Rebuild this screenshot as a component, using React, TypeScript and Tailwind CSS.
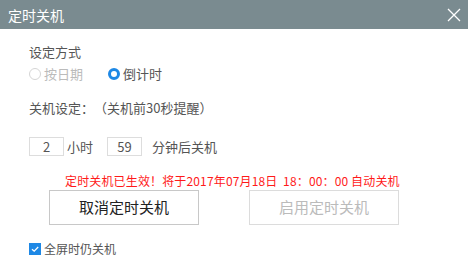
import React from "react";

export default function App() {
  const font = { fontFamily: '"Noto Sans CJK SC", "Liberation Sans", sans-serif' };
  return (
    <div className="w-[468px] h-[270px] bg-white overflow-hidden [text-spacing-trim:space-all]" style={font}>
      <div className="h-[29px] bg-[#7a8b90] flex items-center justify-between pl-[8px] pr-[7px]">
        <span className="text-[14px] text-white leading-none">定时关机</span>
        <svg width="14" height="14" viewBox="0 0 14 14" className="mt-[1px]">
          <path d="M1 1 L13 13 M13 1 L1 13" stroke="#ffffff" strokeWidth="1.3" fill="none" />
        </svg>
      </div>
      <div className="pl-[29px] flex flex-col">
        <div className="mt-[14px] h-[18px] flex items-center text-[13px] text-[#555]">设定方式</div>
        <div className="mt-[4px] h-[18px] flex items-center text-[13px]">
          <div className="flex items-center w-[79px]">
            <span className="w-[12px] h-[12px] rounded-full border border-[#d5d5d5] bg-white"></span>
            <span className="ml-[3px] text-[#bbbbbb]">按日期</span>
          </div>
          <div className="flex items-center">
            <span className="w-[12px] h-[12px] rounded-full border-[3px] border-[#1e88e5] bg-white"></span>
            <span className="ml-[3px] text-[#555]">倒计时</span>
          </div>
        </div>
        <div className="mt-[16px] h-[18px] flex items-center text-[13px] text-[#555]">关机设定：（关机前30秒提醒）</div>
        <div className="mt-[20px] flex items-center text-[13px] text-[#555]">
          <div className="w-[35px] h-[19px] border border-[#dddddd] flex items-center justify-center">2</div>
          <span className="ml-[3px]">小时</span>
          <div className="ml-[14px] w-[35px] h-[19px] border border-[#dddddd] flex items-center justify-center">59</div>
          <span className="ml-[10px]">分钟后关机</span>
        </div>
        <div className="mt-[17px] h-[14px] flex items-center text-[12px] text-[#ff1a1a] pl-[36px] whitespace-pre tracking-[0.15px]">定时关机已生效！将于2017年07月18日  18：00：00 自动关机</div>
        <div className="mt-[2px] flex pl-[20px] gap-[50px]">
          <div className="w-[150px] h-[35px] border border-[#c8c8c8] flex items-center justify-center text-[15px] text-[#222]">取消定时关机</div>
          <div className="w-[150px] h-[35px] border border-[#dcdcdc] flex items-center justify-center text-[15px] text-[#bbbbbb]">启用定时关机</div>
        </div>
        <div className="mt-[15px] flex items-center text-[12px] text-[#555]">
          <span className="w-[12px] h-[12px] bg-[#1e88e5] flex items-center justify-center">
            <svg width="10" height="10" viewBox="0 0 10 10">
              <path d="M2 5.2 L4.2 7.2 L8.2 3" stroke="#ffffff" strokeWidth="1.3" fill="none" />
            </svg>
          </span>
          <span className="ml-[3px]">全屏时仍关机</span>
        </div>
      </div>
    </div>
  );
}
